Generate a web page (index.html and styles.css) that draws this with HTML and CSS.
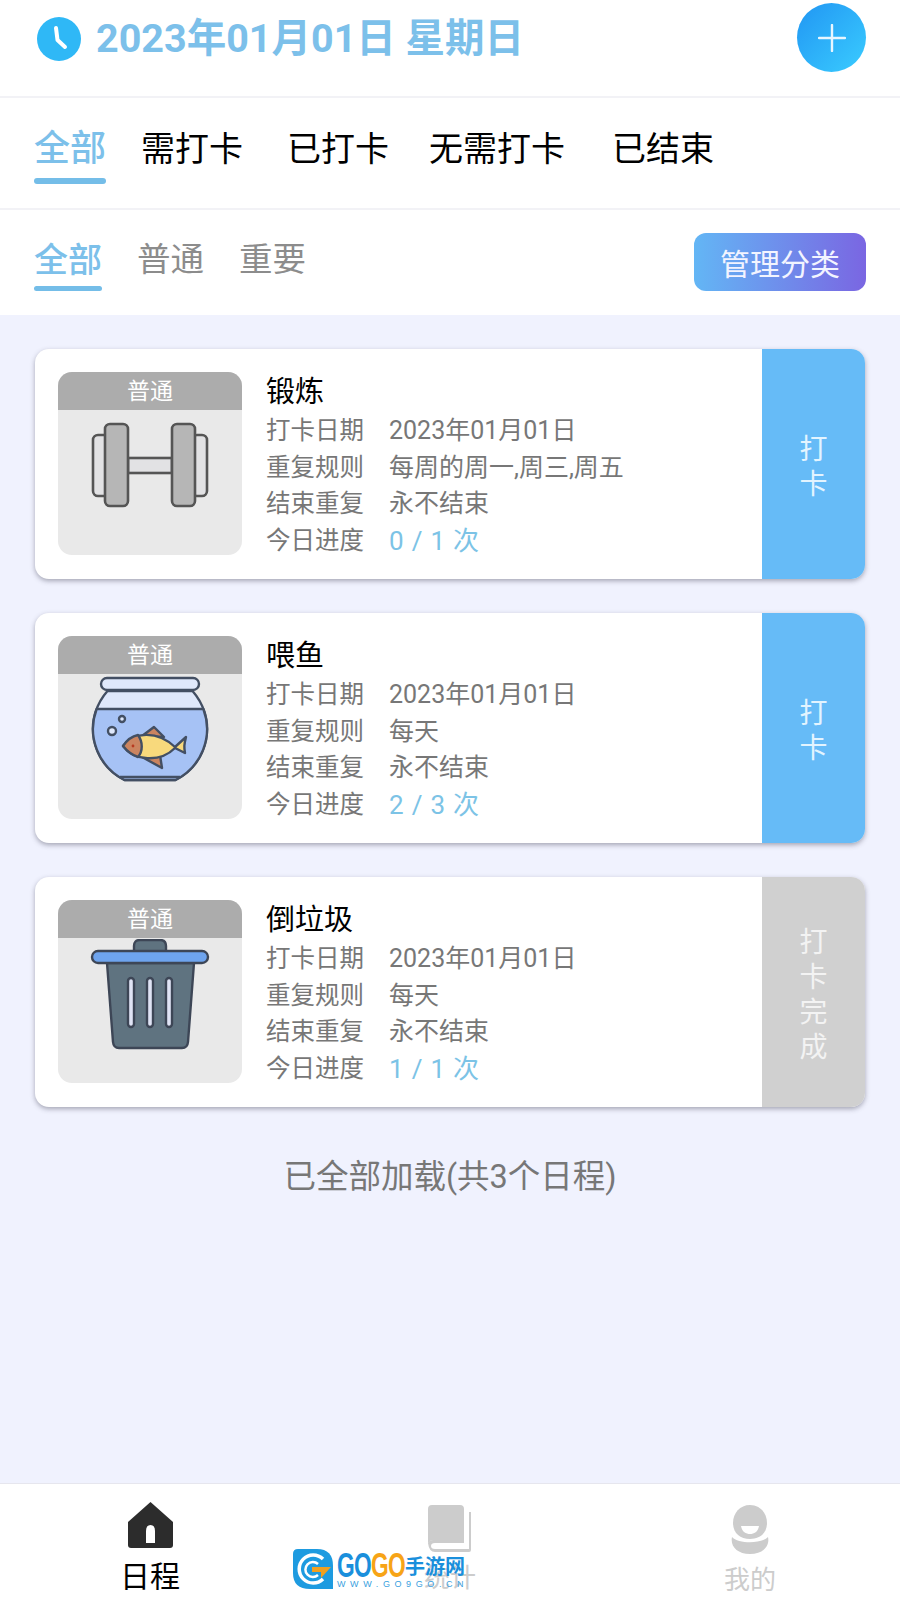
FILE: index.html
```html
<!DOCTYPE html>
<html lang="zh-CN">
<head>
  <meta charset="UTF-8" />
  <meta name="viewport" content="width=device-width, initial-scale=1.0"/>
  <title>日程</title>
  <link rel="stylesheet" href="styles.css">
</head>
<body>

<div class="page">

  <header class="date-bar">
    <div class="date-left">
      <svg class="clock" viewBox="0 0 44 44">
        <circle cx="22" cy="22" r="22" fill="#2fb8f6"/>
        <path d="M19 11 L20.500 23 L28 30" fill="none" stroke="#fff" stroke-width="4" stroke-linecap="round" stroke-linejoin="round"/>
      </svg>
      <span class="date-text">2023年01月01日 星期日</span>
    </div>
    <button class="add-btn">
      <svg viewBox="0 0 28 28" width="28" height="28">
        <path d="M14 1 V27 M1 14 H27" stroke="#e8f6ff" stroke-width="2.400" stroke-linecap="round"/>
      </svg>
    </button>
  </header>

  <nav class="status-tabs">
    <span class="status-tab active">全部</span>
    <span class="status-tab">需打卡</span>
    <span class="status-tab">已打卡</span>
    <span class="status-tab">无需打卡</span>
    <span class="status-tab">已结束</span>
  </nav>

  <nav class="type-bar">
    <span class="type-tab active">全部</span>
    <span class="type-tab">普通</span>
    <span class="type-tab">重要</span>
    <button class="manage-btn">管理分类</button>
  </nav>

  <main class="content">

    <!-- 锻炼 -->
    <div class="card">
      <div class="card-body">
        <div class="thumb">
          <div class="thumb-label">普通</div>
          <svg class="thumb-icon" viewBox="0 0 128 128">
            <g stroke="#555" stroke-width="2.600">
              <rect x="7" y="24" width="16" height="61" rx="5" fill="#e2e2e4"/>
              <rect x="106" y="24" width="15" height="61" rx="5" fill="#e2e2e4"/>
              <rect x="42" y="47" width="44" height="15" fill="#e2e2e4"/>
              <rect x="19" y="13" width="23" height="82" rx="5" fill="#b6b6b6"/>
              <rect x="86" y="13" width="23" height="82" rx="5" fill="#b6b6b6"/>
            </g>
          </svg>
        </div>
        <div class="info">
          <div class="title">锻炼</div>
          <div class="row"><span class="row-label">打卡日期</span><span class="row-value">2023年01月01日</span></div>
          <div class="row"><span class="row-label">重复规则</span><span class="row-value">每周的周一,周三,周五</span></div>
          <div class="row"><span class="row-label">结束重复</span><span class="row-value">永不结束</span></div>
          <div class="row"><span class="row-label">今日进度</span><span class="progress">0 / 1 次</span></div>
        </div>
      </div>
      <div class="check-btn"><span>打卡</span></div>
    </div>

    <!-- 喂鱼 -->
    <div class="card">
      <div class="card-body">
        <div class="thumb">
          <div class="thumb-label">普通</div>
          <svg class="thumb-icon" viewBox="0 0 128 128">
            <g stroke="#434f63" stroke-width="2.400" stroke-linejoin="round">
              <path d="M21.500 16 A57 57 0 0 0 38.500 105 L89.500 105 A57 57 0 0 0 106.500 16 Z" fill="#dfe8fb"/>
              <path d="M10.600 34 A57 57 0 0 0 38.500 105 L89.500 105 A57 57 0 0 0 117.400 34 Z" fill="#a6c2f5"/>
              <path d="M34 102 L94 102" fill="none"/>
              <rect x="15" y="3" width="98" height="12" rx="6" fill="#dfe8fb"/>
              <circle cx="36" cy="44" r="3" fill="#dfe8fb"/>
              <circle cx="26" cy="56" r="4" fill="#dfe8fb"/>
              <path d="M56 61 L68 52 L78 62 Z" fill="#cb8460"/>
              <path d="M56 82 L76 93 L74 80 Z" fill="#cb8460"/>
              <path d="M37 71 C48 56 72 56 89 72 L100 62 C98 70 98 72 99 78 L89 73 C74 88 48 86 37 71 Z" fill="#f8d97c"/>
              <path d="M37 71 C41 65 47 61 52 60 C57 67 57 76 52 82 C46 80 41 76 37 71 Z" fill="#cb8460"/>
            </g>
            <circle cx="47" cy="71" r="1.400" fill="#b73a20"/>
          </svg>
        </div>
        <div class="info">
          <div class="title">喂鱼</div>
          <div class="row"><span class="row-label">打卡日期</span><span class="row-value">2023年01月01日</span></div>
          <div class="row"><span class="row-label">重复规则</span><span class="row-value">每天</span></div>
          <div class="row"><span class="row-label">结束重复</span><span class="row-value">永不结束</span></div>
          <div class="row"><span class="row-label">今日进度</span><span class="progress">2 / 3 次</span></div>
        </div>
      </div>
      <div class="check-btn"><span>打卡</span></div>
    </div>

    <!-- 倒垃圾 -->
    <div class="card">
      <div class="card-body">
        <div class="thumb">
          <div class="thumb-label">普通</div>
          <svg class="thumb-icon" viewBox="0 0 128 128">
            <g stroke="#3d4656" stroke-width="2.400" stroke-linejoin="round">
              <path d="M48 13 V7 Q48 1 54 1 H74 Q80 1 80 7 V13 Z" fill="#5f7380"/>
              <path d="M21 24 H108 L102 103 Q101.500 109 96 109 H33 Q27.500 109 27 103 Z" fill="#5f7380"/>
              <rect x="6" y="12" width="116" height="12" rx="6" fill="#6ea4ee"/>
              <rect x="42" y="39" width="6" height="49" rx="3" fill="#e0e4f5"/>
              <rect x="61" y="39" width="6" height="49" rx="3" fill="#e0e4f5"/>
              <rect x="80" y="39" width="6" height="49" rx="3" fill="#e0e4f5"/>
            </g>
          </svg>
        </div>
        <div class="info">
          <div class="title">倒垃圾</div>
          <div class="row"><span class="row-label">打卡日期</span><span class="row-value">2023年01月01日</span></div>
          <div class="row"><span class="row-label">重复规则</span><span class="row-value">每天</span></div>
          <div class="row"><span class="row-label">结束重复</span><span class="row-value">永不结束</span></div>
          <div class="row"><span class="row-label">今日进度</span><span class="progress">1 / 1 次</span></div>
        </div>
      </div>
      <div class="check-btn done"><span>打卡完成</span></div>
    </div>

    <p class="load-note">已全部加载(共3个日程)</p>
  </main>

  <footer class="tabbar">
    <div class="tabbar-item active">
      <svg viewBox="0 0 45 46" width="45" height="46">
        <path d="M22.500 0 L45 20 V43 Q45 46 42 46 H3 Q0 46 0 43 V20 Z" fill="#2c2c2c"/>
        <path d="M18 41 V29 Q18 23 22.500 23 Q27 23 27 29 V41 Z" fill="#fff"/>
      </svg>
      <span>日程</span>
    </div>
    <div class="tabbar-item">
      <svg viewBox="0 0 44 47" width="44" height="47">
        <path d="M4 0 H32 Q36 0 36 4 V35 H6 Q0 35 0 40 V4 Q0 0 4 0 Z" fill="#ccc"/>
        <path d="M0 38 Q1 47 7 47 H41 Q43 47 43 45 V7 H41 V44 H7 Q3 44 3 41 Q3 38 7 38 H36 V35 H5 Q1 35 0 38 Z" fill="#ccc"/>
      </svg>
      <span>统计</span>
    </div>
    <div class="tabbar-item">
      <svg viewBox="0 0 38 49" width="38" height="49">
        <path d="M19 0 C29 0 36 8 36 18 C36 28 29 34 19 34 C9 34 2 28 2 18 C2 8 9 0 19 0 Z" fill="#ccc"/>
        <path d="M10 21 H28 C27 27 23 29 19 29 C15 29 11 27 10 21 Z" fill="#fff"/>
        <path d="M1 32 C7 39 31 39 37 32 C39 41 32 49 19 49 C6 49 -1 41 1 32 Z" fill="#ccc"/>
      </svg>
      <span>我的</span>
    </div>

    <!-- site watermark stamped over the tab bar -->
    <div class="watermark">
      <svg class="wm-logo" viewBox="0 0 40 40">
        <path d="M0 5 Q0 0 5 0 H24 Q40 0 40 17 V40 H17 Q0 40 0 24 Z" fill="#1e9be0"/>
        <path d="M30 10 A14 14 0 1 0 30 30" fill="none" stroke="#fff" stroke-width="3.500"/>
        <path d="M25 15 A7.500 7.500 0 1 0 25 26" fill="none" stroke="#fff" stroke-width="2.500"/>
        <path d="M19 18 H38 L28 29 V23 H19 Z" fill="#f0a020"/>
      </svg>
      <div class="wm-text">
        <div class="wm-name"><span class="wm-go wm-blue">GO</span><span class="wm-go wm-orange">GO</span><span class="wm-blue wm-cn">手游网</span></div>
        <div class="wm-url">WWW.GO9GO.CN</div>
      </div>
    </div>
  </footer>

</div>

</body>
</html>
```

FILE: styles.css
```css
body {
  margin: 0;
  padding: 0;
  background-color: #ffffff;
  color: #000;
  font-family: "Roboto", "Noto Sans CJK SC", sans-serif;
}

button {
  border: none;
  padding: 0;
  font-family: inherit;
}

.page {
  width: 900px;
  height: 1600px;
  display: flex;
  flex-direction: column;
  overflow: hidden;
}

/* date bar */
.date-bar {
  height: 96px;
  flex: none;
  display: flex;
  align-items: flex-start;
  justify-content: space-between;
  padding: 0 34px 0 37px;
  border-bottom: 2px solid #f2f2f6;
}

.date-left {
  display: flex;
  align-items: center;
  gap: 15px;
  margin-top: 16px;
}

.clock {
  width: 44px;
  height: 44px;
}

.date-text {
  font-size: 39.500px;
  line-height: 46px;
  font-weight: 700;
  color: #7cc0ea;
}

.add-btn {
  width: 69px;
  height: 69px;
  margin-top: 3px;
  border-radius: 50%;
  background: linear-gradient(135deg, #2196f3, #3accff);
  display: flex;
  align-items: center;
  justify-content: center;
}

/* status tabs */
.status-tabs {
  height: 110px;
  flex: none;
  display: flex;
  align-items: flex-start;
  gap: 44px;
  padding: 0 34px;
  border-bottom: 2px solid #f2f2f6;
}

.status-tab {
  font-size: 34px;
  line-height: 50px;
  margin-top: 26px;
  white-space: nowrap;
}

.status-tab.active {
  position: relative;
  font-size: 36px;
  font-weight: 500;
  color: #7cc0ea;
  margin-right: -9px;
}

.status-tab.active::after {
  content: "";
  position: absolute;
  left: 0;
  right: 0;
  top: 54px;
  height: 6px;
  border-radius: 3px;
  background-color: #74bde8;
}

.status-tab:nth-child(4) {
  margin-left: -4px;
}

.status-tab:nth-child(5) {
  margin-left: 3px;
}

/* type tabs */
.type-bar {
  height: 105px;
  flex: none;
  display: flex;
  align-items: flex-start;
  gap: 35px;
  padding: 0 34px;
}

.type-tab {
  font-size: 33.500px;
  line-height: 48px;
  margin-top: 26px;
  color: #8c8c8c;
}

.type-tab.active {
  position: relative;
  font-size: 34px;
  font-weight: 500;
  color: #7cc0ea;
}

.type-tab.active::after {
  content: "";
  position: absolute;
  left: 0;
  right: 0;
  top: 50px;
  height: 5px;
  border-radius: 3px;
  background-color: #74bde8;
}

.manage-btn {
  margin-left: auto;
  margin-top: 23px;
  width: 172px;
  height: 58px;
  border-radius: 12px;
  background: linear-gradient(90deg, #63b6f5, #7a66e2);
  color: #f2f4ff;
  font-size: 30px;
}

/* list */
.content {
  flex: 1;
  background-color: #f0f2fe;
  padding: 34px 35px 0;
}

.card {
  height: 230px;
  display: flex;
  margin-bottom: 34px;
  background-color: #fff;
  border-radius: 14px;
  box-shadow: 0 2px 5px rgba(70, 70, 90, 0.45);
  overflow: hidden;
}

.card-body {
  flex: 1;
  display: flex;
  gap: 24px;
  padding: 23px;
}

.thumb {
  width: 184px;
  height: 183px;
  border-radius: 14px;
  overflow: hidden;
  background-color: #e9e9e9;
}

.thumb-label {
  height: 38px;
  line-height: 39px;
  text-align: center;
  font-size: 23px;
  color: #fff;
  background-color: #acacac;
}

.thumb-icon {
  display: block;
  width: 128px;
  height: 128px;
  margin: 1px auto 0;
}

.info {
  flex: 1;
  padding-top: 2px;
}

.title {
  font-size: 29px;
  line-height: 36px;
  margin-bottom: 3px;
}

.row {
  display: flex;
  font-size: 24.500px;
  line-height: 36.500px;
  color: #777;
}

.row-label {
  width: 123px;
}

.row-value {
  font-size: 25px;
}

.progress {
  font-size: 26px;
  letter-spacing: 0.800px;
  color: #7cc3e6;
}

.check-btn {
  width: 103px;
  flex: none;
  display: flex;
  align-items: center;
  justify-content: center;
  padding-top: 5px;
  background-color: #66bbf7;
  color: #e3f4ff;
  font-size: 28px;
  line-height: 35px;
}

.check-btn span {
  width: 1em;
}

.check-btn.done {
  background-color: #d0d0d0;
  color: #f3f3f3;
}

.load-note {
  margin: 46px 0 0;
  text-align: center;
  font-size: 32.500px;
  line-height: 48px;
  color: #777;
}

/* bottom tabs */
.tabbar {
  position: relative;
  height: 116px;
  flex: none;
  display: flex;
  border-top: 1px solid #e6e6ee;
  background-color: #fff;
}

.tabbar-item {
  flex: 1;
  display: flex;
  flex-direction: column;
  align-items: center;
  padding-top: 21px;
  color: #ccc;
  font-size: 26px;
}

.tabbar-item span {
  line-height: 36px;
  margin-top: 8px;
}

.tabbar-item.active {
  padding-top: 18px;
  color: #000;
  font-size: 30px;
}

.tabbar-item.active span {
  margin-top: 11px;
}

.watermark {
  position: absolute;
  left: 293px;
  top: 65px;
  display: flex;
  gap: 4px;
}

.wm-logo {
  width: 40px;
  height: 40px;
}

.wm-name {
  height: 31px;
  line-height: 31px;
  font-family: "Liberation Sans", "Noto Sans CJK SC", sans-serif;
  font-size: 35px;
  font-weight: 700;
  white-space: nowrap;
}

.wm-blue {
  color: #1a8fdc;
}

.wm-orange {
  color: #f7a416;
}

.wm-go {
  display: inline-block;
  width: 34px;
  letter-spacing: -1px;
  transform: scaleX(0.65);
  transform-origin: left;
}

.wm-cn {
  font-size: 20px;
  vertical-align: 3px;
}

.wm-url {
  font-family: "Liberation Sans", sans-serif;
  font-size: 9px;
  line-height: 9px;
  letter-spacing: 4.600px;
  color: #3a9fe0;
  white-space: nowrap;
}
```
